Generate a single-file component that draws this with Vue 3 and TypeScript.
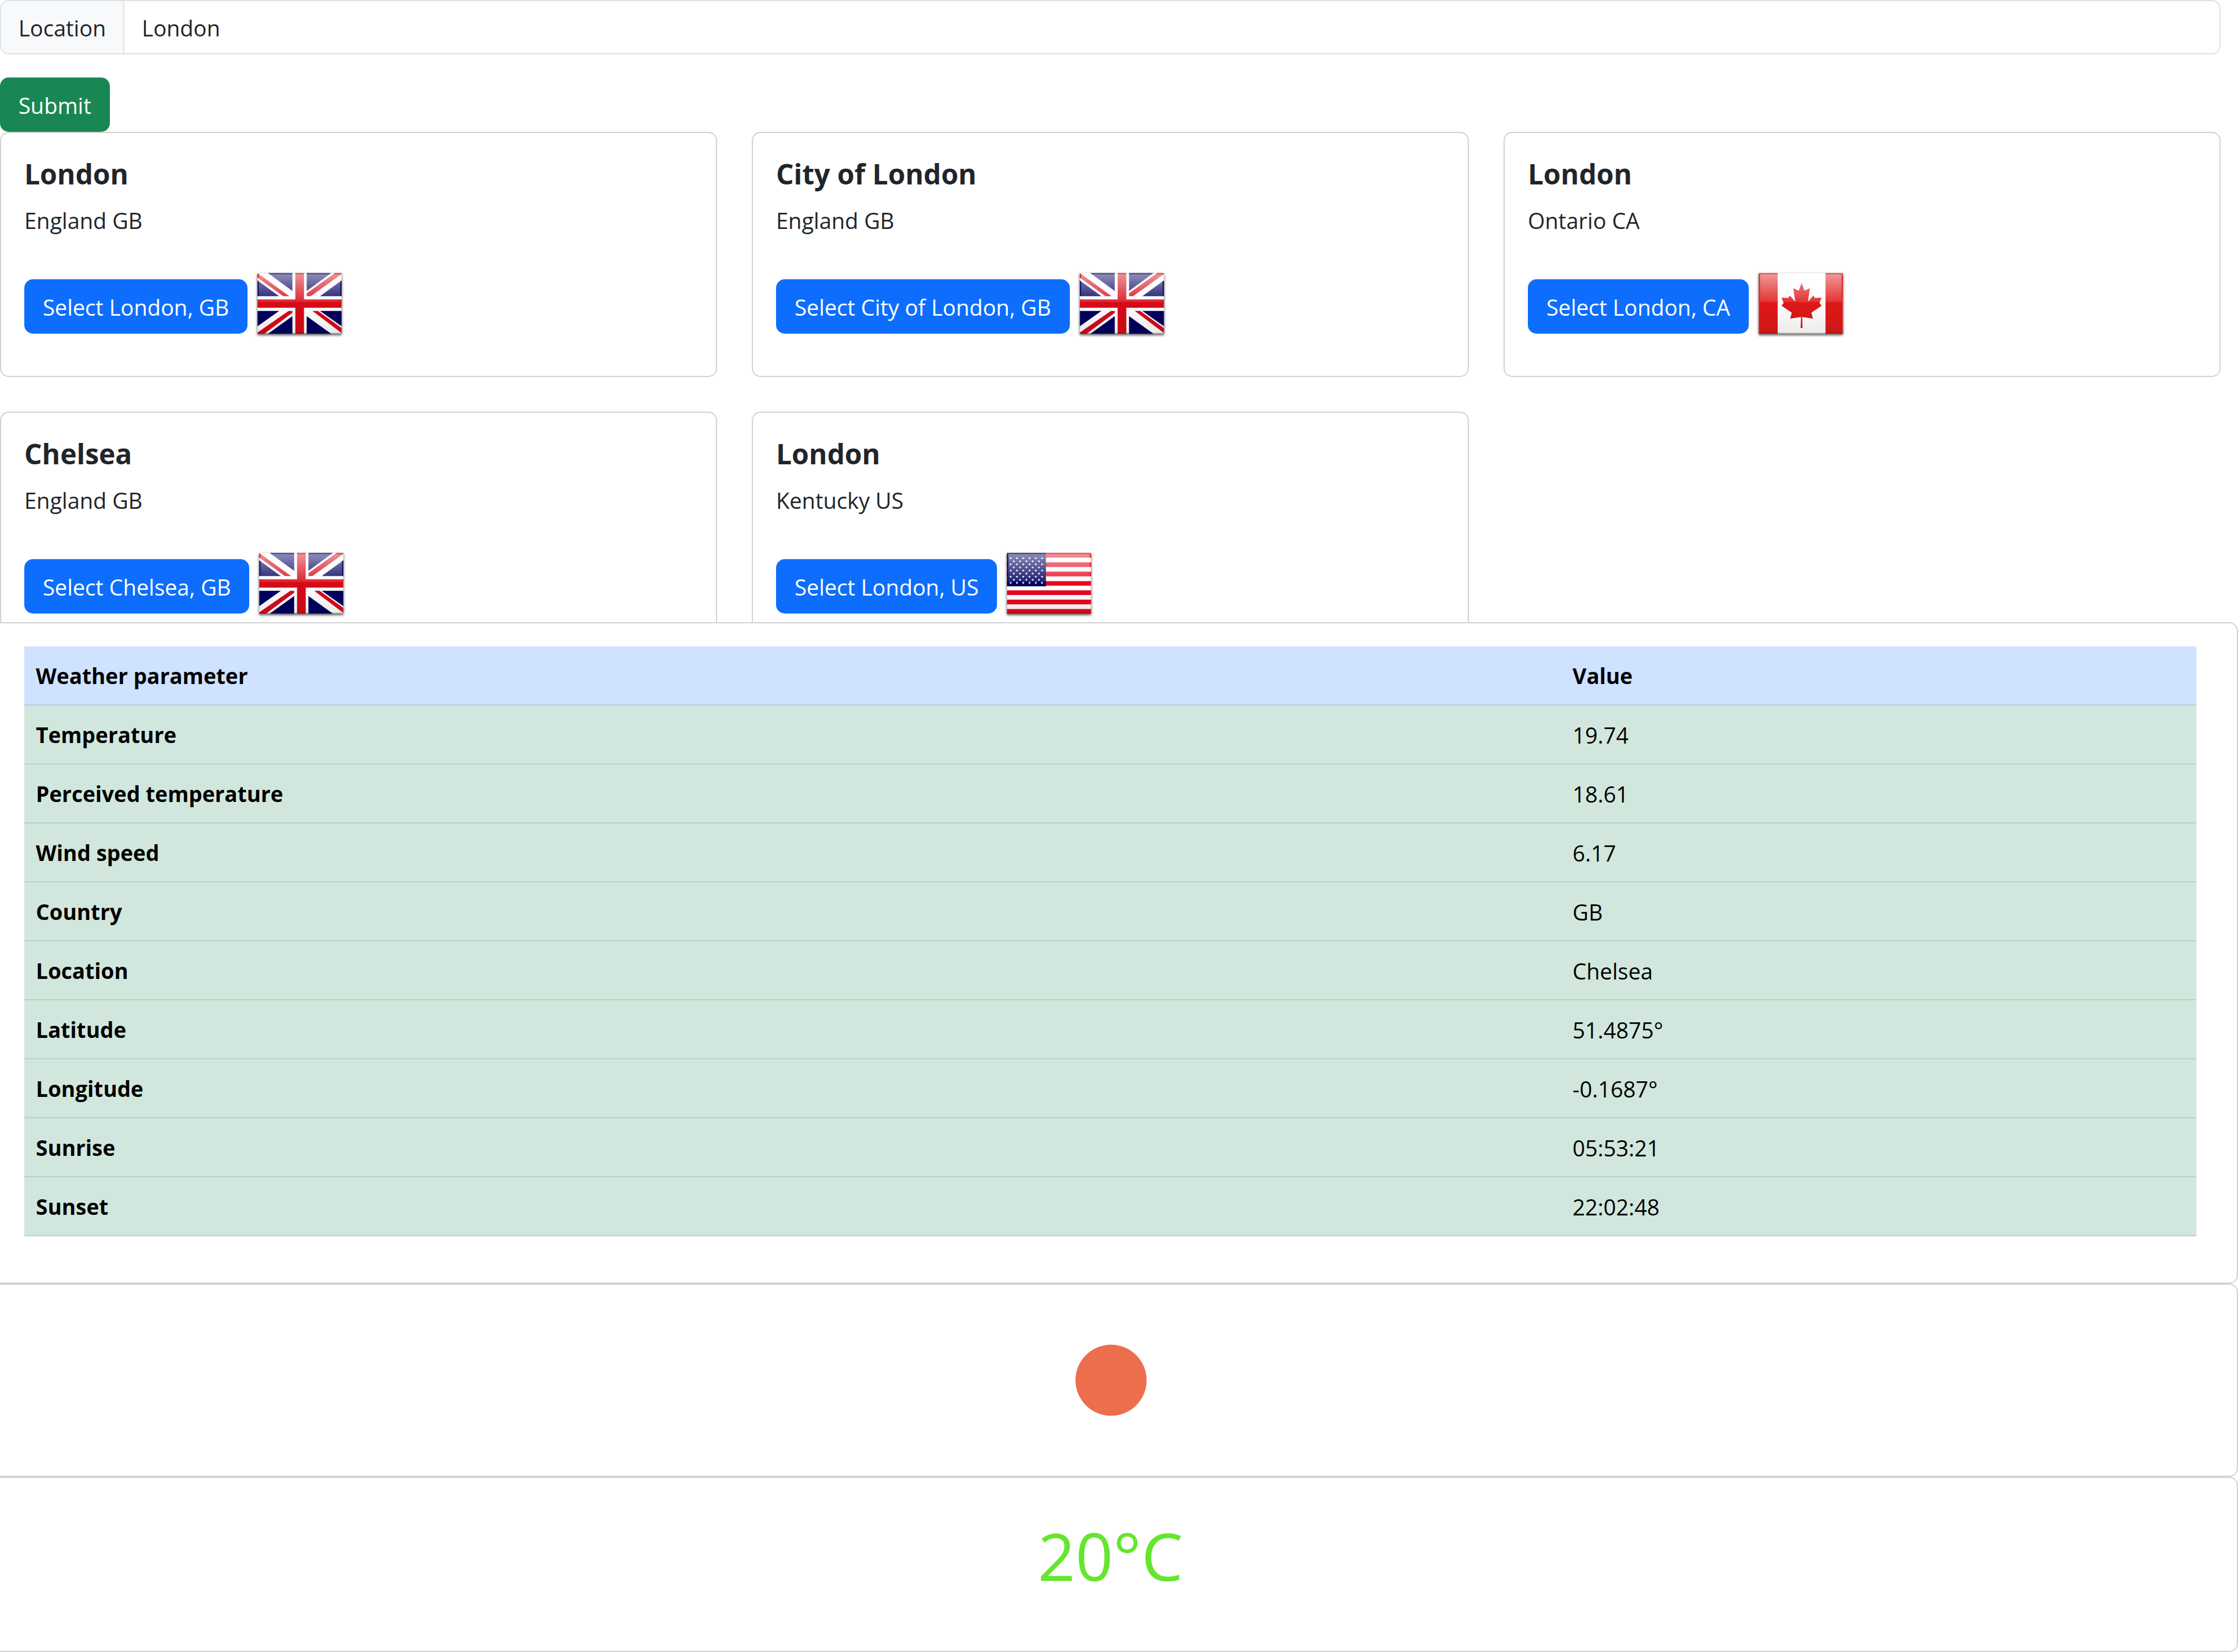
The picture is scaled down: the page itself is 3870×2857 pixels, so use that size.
<script setup lang="ts">
import { ref } from 'vue'

type CountryCode = 'GB' | 'CA' | 'US'

interface Place {
  name: string
  region: string
  country: CountryCode
}

interface WeatherRow {
  parameter: string
  value: string
}

const query = ref('London')

const places: Place[] = [
  { name: 'London', region: 'England', country: 'GB' },
  { name: 'City of London', region: 'England', country: 'GB' },
  { name: 'London', region: 'Ontario', country: 'CA' },
  { name: 'Chelsea', region: 'England', country: 'GB' },
  { name: 'London', region: 'Kentucky', country: 'US' },
]

const weather: WeatherRow[] = [
  { parameter: 'Temperature', value: '19.74' },
  { parameter: 'Perceived temperature', value: '18.61' },
  { parameter: 'Wind speed', value: '6.17' },
  { parameter: 'Country', value: 'GB' },
  { parameter: 'Location', value: 'Chelsea' },
  { parameter: 'Latitude', value: '51.4875°' },
  { parameter: 'Longitude', value: '-0.1687°' },
  { parameter: 'Sunrise', value: '05:53:21' },
  { parameter: 'Sunset', value: '22:02:48' },
]

// Star positions: nine rows alternating between six and five stars.
const stars = Array.from({ length: 9 }, (_, row) =>
  Array.from({ length: row % 2 ? 5 : 6 }, (_, col) => ({
    x: 41 + col * 32.6 + (row % 2 ? 16.3 : 0),
    y: 94 + row * 16,
  })),
).flat()

const stripeHeight = 315 / 13
</script>

<template>
  <main class="page">
    <svg class="defs" width="0" height="0" aria-hidden="true">
      <defs>
        <linearGradient id="flag-gloss" x1="0" y1="0" x2="0" y2="1">
          <stop offset="0" stop-color="#fff" stop-opacity="0.55" />
          <stop offset="1" stop-color="#fff" stop-opacity="0.12" />
        </linearGradient>
        <linearGradient id="flag-shade" x1="0" y1="0" x2="0" y2="1">
          <stop offset="0" stop-color="#000" stop-opacity="0" />
          <stop offset="1" stop-color="#000" stop-opacity="0.08" />
        </linearGradient>
      </defs>
    </svg>

    <section class="search">
      <form @submit.prevent>
        <div class="input-group">
          <label class="input-label" for="location">Location</label>
          <input id="location" v-model="query" class="input" type="text" />
        </div>
        <button class="btn btn-success" type="submit">Submit</button>
      </form>

      <div class="places">
        <article v-for="(place, i) in places" :key="i" class="card">
          <h5 class="card-title">{{ place.name }}</h5>
          <p class="card-text">{{ place.region }} {{ place.country }}</p>
          <div class="card-actions">
            <button class="btn btn-primary" type="button">
              Select {{ place.name }}, {{ place.country }}
            </button>
            <svg class="flag" viewBox="0 0 480 480" role="img" :aria-label="place.country">
              <g v-if="place.country === 'GB'">
                <rect x="22" y="67" width="436" height="315" fill="#fff" />
                <path
                  fill="#00005f"
                  d="M76 67H203V160ZM22 105V187H134ZM277 67H404L277 160ZM458 105V187H346ZM22 263H134L22 343ZM203 290V382H76ZM346 263H458V343ZM277 290L404 382H277Z"
                />
                <path
                  fill="#d80a18"
                  d="M22 67L187 187H155L22 91ZM423 67H458V72L298 187H277V172ZM22 382V375L183 263H203V273L57 382ZM307 263H335L458 352V378Z"
                />
                <path fill="#d80a18" d="M218 67H263V203H458V247H263V382H218V247H22V203H218Z" />
              </g>
              <g v-else-if="place.country === 'CA'">
                <rect x="22" y="67" width="436" height="315" fill="#fff" />
                <path
                  fill="#df1818"
                  d="M22 67H120V382H22ZM368 67H458V382H368ZM244 118L229 158L201 145L211 215L183 183L175 196L140 194L151 222L140 236L193 272L185 303L241 295L239 352H249L247 295L303 303L295 272L348 236L337 222L348 194L313 196L305 183L277 215L287 145L259 158Z"
                />
              </g>
              <g v-else>
                <rect x="22" y="67" width="436" height="315" fill="#fff" />
                <rect
                  v-for="n in 7"
                  :key="n"
                  x="22"
                  :y="67 + (n - 1) * 2 * stripeHeight"
                  width="436"
                  :height="stripeHeight"
                  fill="#e8061f"
                />
                <rect x="22" y="67" width="202" height="173" fill="#00005f" />
                <circle
                  v-for="(star, s) in stars"
                  :key="s"
                  :cx="star.x"
                  :cy="star.y"
                  r="5"
                  fill="#dcdcf0"
                />
              </g>
              <rect x="22" y="217" width="436" height="165" fill="url(#flag-shade)" />
              <rect x="28" y="73" width="424" height="144" fill="url(#flag-gloss)" />
              <rect x="22" y="67" width="436" height="6" fill="#fff" opacity="0.3" />
              <rect x="22" y="377" width="436" height="5" fill="#000" opacity="0.3" />
            </svg>
          </div>
        </article>
      </div>
    </section>

    <section class="panel">
      <table class="weather">
        <thead>
          <tr>
            <th class="parameter" scope="col">Weather parameter</th>
            <th scope="col">Value</th>
          </tr>
        </thead>
        <tbody>
          <tr v-for="row in weather" :key="row.parameter">
            <th scope="row">{{ row.parameter }}</th>
            <td>{{ row.value }}</td>
          </tr>
        </tbody>
      </table>
    </section>

    <section class="panel">
      <svg class="condition" viewBox="0 0 100 100" role="img" aria-label="Clear sky">
        <circle cx="50.5" cy="50" r="24.6" fill="#ec6e4c" />
      </svg>
    </section>

    <section class="panel">
      <p class="reading">20°C</p>
    </section>
  </main>
</template>

<style>
body {
  margin: 0;
  background: #fff;
}
</style>

<style scoped>
.page,
.page * {
  box-sizing: border-box;
}

.page {
  color: #212529;
  font-family: 'Open Sans', 'Noto Sans', sans-serif;
  font-size: 38px;
  line-height: 60px;
}

.defs {
  position: absolute;
}

.search {
  max-height: 1076px;
  padding-right: 30px;
  overflow: hidden;
}

.input-group {
  display: flex;
  margin-bottom: 40px;
}

.input-label {
  padding: 16px 30px 14px;
  border: 2px solid #dee2e6;
  border-radius: 15px 0 0 15px;
  background: #f8f9fa;
}

.input {
  flex: 1;
  min-width: 0;
  margin-left: -2px;
  padding: 16px 30px 14px;
  border: 2px solid #dee2e6;
  border-radius: 0 15px 15px 0;
  background: #fff;
  color: inherit;
  font: inherit;
  outline: none;
}

.btn {
  display: block;
  padding: 16px 30px 14px;
  border: 2px solid transparent;
  border-radius: 15px;
  color: #fff;
  font: inherit;
  white-space: nowrap;
  cursor: pointer;
}

.btn-success {
  border-color: #198754;
  background: #198754;
}

.btn-primary {
  border-color: #0d6efd;
  background: #0d6efd;
}

.places {
  display: grid;
  grid-template-columns: repeat(3, 1fr);
  gap: 60px;
}

.card {
  padding: 41px 40px 39px;
  border: 2px solid #d2d2d2;
  border-radius: 15px;
}

.card-title {
  margin: 0 0 20px;
  font-size: 48px;
  font-weight: 700;
  line-height: 60px;
}

.card-text {
  margin: 0 0 39px;
}

.card-actions {
  display: flex;
  align-items: center;
  gap: 10px;
  margin-bottom: 1px;
}

.flag {
  width: 160px;
  height: 160px;
  filter: drop-shadow(0 2px 2px rgba(0, 0, 0, 0.7));
}

.panel {
  padding: 40px 70px 40px 42px;
  border: 2px solid #d2d2d2;
  border-left: none;
  border-radius: 0 15px 15px 0;
}

.weather {
  width: 100%;
  margin-bottom: 40px;
  border-spacing: 0;
  color: #000;
  text-align: left;
}

.weather th,
.weather td {
  padding: 21px 20px 19px;
  border-bottom: 2px solid #bcd0c7;
  background: #d1e7dd;
}

.weather th {
  font-size: 37px;
}

.weather thead th {
  border-color: #bacbe6;
  background: #cfe2ff;
}

.weather .parameter {
  width: 70.75%;
}

.condition {
  display: block;
  width: 250px;
  height: 250px;
  margin: 0 auto;
}

.reading {
  margin: 4px 0 35px;
  color: #64e62d;
  font-size: 114px;
  line-height: 180px;
  text-align: center;
}
</style>
